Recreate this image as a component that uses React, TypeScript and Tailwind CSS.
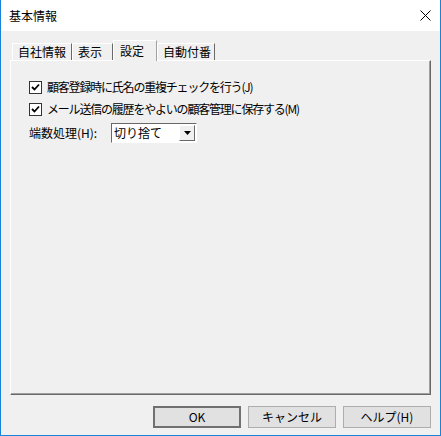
import React from "react";

const font = "font-['Noto_Sans_CJK_JP','Liberation_Sans',sans-serif]";

const tabs = [
  { label: "自社情報", w: "w-[60px]" },
  { label: "表示", w: "w-[41px]" },
  { label: "設定", w: "w-[44px]", active: true },
  { label: "自動付番", w: "w-[58px]" },
];

function Check({ label }: { label: string }) {
  return (
    <div className="flex items-center h-[22px]">
      <div className="w-[13px] h-[13px] border border-[#333] bg-white flex items-center justify-center">
        <svg width="9" height="9" viewBox="0 0 9 9">
          <path d="M1 4 L3.5 6.5 L8 1.5" stroke="#000" strokeWidth="1.8" fill="none" />
        </svg>
      </div>
      <span className="ml-[5px] text-[12px] tracking-[-1.2px] text-black leading-none">{label}</span>
    </div>
  );
}

function Btn({ label, def }: { label: string; def?: boolean }) {
  return (
    <button
      className={
        "w-[88px] h-[22px] text-[12px] leading-none text-black bg-[#e1e1e1] " +
        (def ? "border-2 border-[#707070]" : "border border-[#adadad]")
      }
    >
      {label}
    </button>
  );
}

export default function App() {
  return (
    <div className={"w-[441px] h-[436px] flex flex-col border-x border-b border-[#1883d7] bg-[#f0f0f0] " + font}>
      {/* Title bar */}
      <div className="h-[31px] bg-white flex items-center justify-between pl-[8px] pr-[9px]">
        <span className="text-[12px] text-black">基本情報</span>
        <svg width="11" height="11" viewBox="0 0 11 11">
          <path d="M0.5 0.5 L10.5 10.5 M10.5 0.5 L0.5 10.5" stroke="#000" strokeWidth="1" />
        </svg>
      </div>

      <div className="flex-1 flex flex-col px-[9px] pt-[9px]">
        {/* Tabs */}
        <div className="h-[20px] flex items-end pl-[2px]">
          {tabs.map((t) =>
            t.active ? (
              <div
                key={t.label}
                className={t.w + " h-[21px] -mb-px relative z-10 bg-[#f0f0f0] border-t border-l border-r border-t-white border-l-white border-r-[#a0a0a0] pl-[6px] pt-[1px] text-[12px] text-black"}
              >
                {t.label}
              </div>
            ) : (
              <div
                key={t.label}
                className={t.w + " h-[17px] border-t border-l border-r border-t-white border-l-white border-r-[#696969] pl-[5px] text-[12px] leading-[16px] text-black"}
              >
                {t.label}
              </div>
            )
          )}
        </div>

        {/* Panel */}
        <div className="h-[335px] border border-t-white border-l-white border-r-[#696969] border-b-[#696969]">
          <div className="h-full border-r border-b border-[#a0a0a0] pl-[18px] pt-[15px] flex flex-col">
            <Check label="顧客登録時に氏名の重複チェックを行う(J)" />
            <Check label="メール送信の履歴をやよいの顧客管理に保存する(M)" />
            <div className="flex items-center mt-[3px]">
              <span className="text-[12px] text-black w-[82px]">端数処理(H):</span>
              <div className="w-[86px] h-[20px] bg-white border border-t-[#696969] border-l-[#696969] border-r-white border-b-white flex items-center">
                <span className="flex-1 text-[12px] pl-[2px] leading-none">切り捨て</span>
                <div className="w-[16px] h-[16px] bg-[#f0f0f0] border border-t-white border-l-white border-r-[#696969] border-b-[#696969] flex items-center justify-center mr-px">
                  <svg width="7" height="4" viewBox="0 0 7 4">
                    <path d="M0 0 H7 L3.5 4 Z" fill="#000" />
                  </svg>
                </div>
              </div>
            </div>
          </div>
        </div>

        {/* Buttons */}
        <div className="flex justify-end gap-[7px] mt-[11px]">
          <Btn label="OK" def />
          <Btn label="キャンセル" />
          <Btn label="ヘルプ(H)" />
        </div>
      </div>
    </div>
  );
}
